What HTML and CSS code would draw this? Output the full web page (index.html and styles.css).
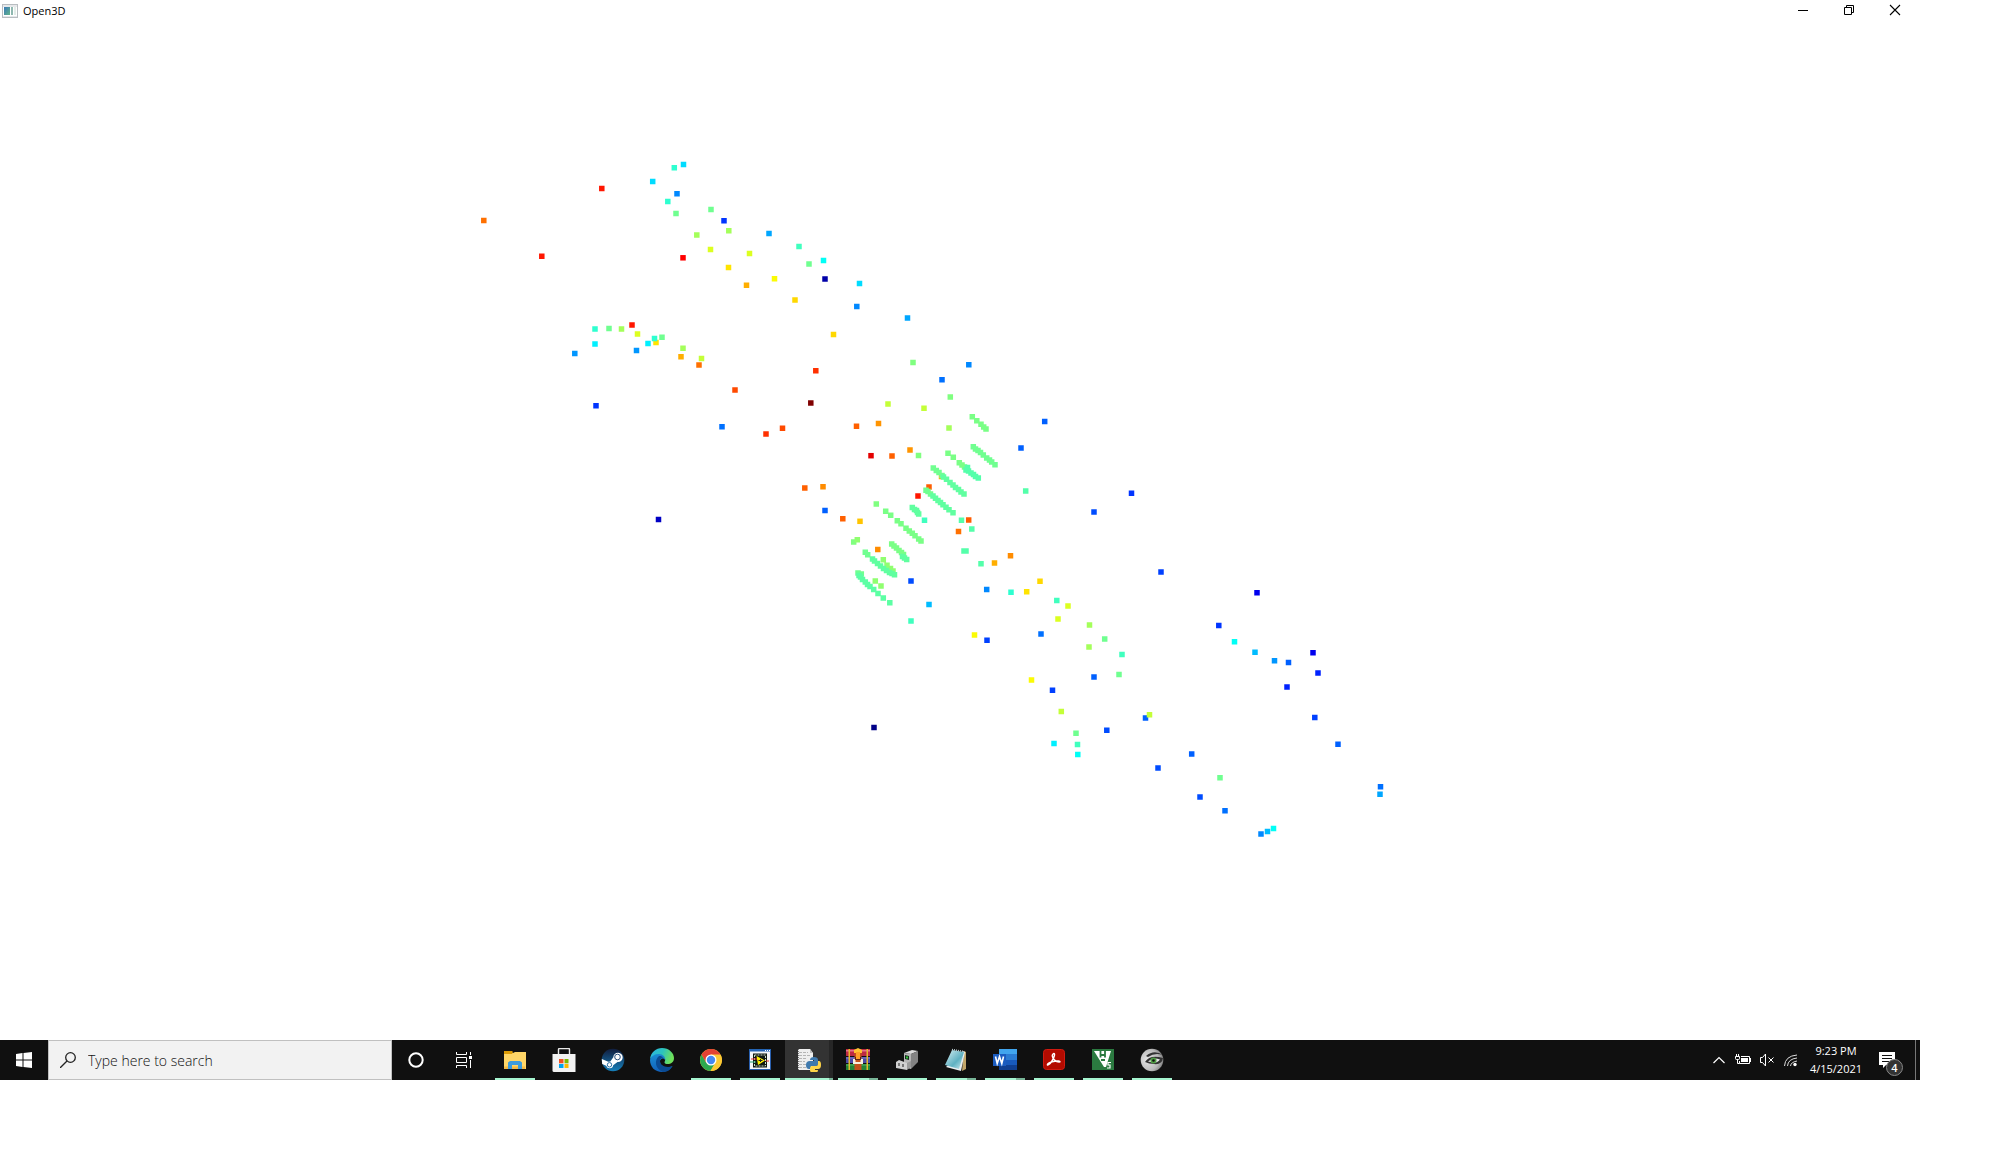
FILE: index.html
```
<!DOCTYPE html>
<html lang="en">
<head>
<meta charset="utf-8">
<title>Open3D</title>
<link rel="stylesheet" href="styles.css">
</head>
<body>
<div class="screen">
<header class="titlebar">
  <svg class="app-icon" width="16" height="14" viewBox="0 0 16 14" aria-hidden="true">
    <defs><linearGradient id="win" x1="0" y1="0" x2="1" y2="1"><stop offset="0" stop-color="#3a78b8"/><stop offset="1" stop-color="#63b58a"/></linearGradient></defs>
    <path fill="#b9bdc1" d="M0 0h16v14H0z"/><path fill="#e6e8ea" d="M1 1h14v12H1z"/>
    <path fill="#fff" d="M1 3h14v9H1z"/><path fill="url(#win)" d="M2 3h6v8H2z"/>
    <path fill="#8fb8b0" d="M9 3h2v8H9z"/><path fill="#e3ece8" d="M12 3h2v8h-2z"/>
  </svg>
  <h1 class="title">Open3D</h1>
  <div class="window-buttons">
    <button class="window-button" aria-label="Minimize"><svg width="12" height="12" viewBox="0 0 12 12"><path stroke="#000" d="M1 6.500h10"/></svg></button>
    <button class="window-button" aria-label="Restore"><svg width="12" height="12" viewBox="0 0 12 12"><path fill="none" stroke="#000" d="M1.500 3.500h7v7h-7zM3.500 3.500v-2h7v7h-2"/></svg></button>
    <button class="window-button" aria-label="Close"><svg width="12" height="12" viewBox="0 0 12 12"><path stroke="#000" stroke-width="1.100" d="M1 1l10 10M11 1L1 11"/></svg></button>
  </div>
</header>

<main class="viewport">
<svg class="cloud" viewBox="0 22 1920 1018" role="img" aria-label="Point cloud">
  <!-- orange points that sit behind the scan lines -->
  <path stroke="#ffb000" d="M941.500 476.500h0"/>
  <path stroke="#ff5c00" d="M929 487h0M968.700 520h0"/>
  <!-- dark blue to blue -->
  <path stroke="#000088" d="M874 727.500h0"/>
  <path stroke="#0000a8" d="M825 279h0"/>
  <path stroke="#0000c4" d="M658.500 519.500h0"/>
  <path stroke="#0000ee" d="M1257 592.700h0M1313 652.700h0"/>
  <path stroke="#0022ff" d="M1318 673h0M1287 687h0"/>
  <path stroke="#0034ff" d="M724 220.800h0M596 405.700h0M1131.500 493.300h0M1218.800 625.500h0"/>
  <path stroke="#0040ff" d="M1161 572h0M1052.500 690.300h0M1314.800 717.500h0M987 640.300h0"/>
  <path stroke="#004cff" d="M1094 512h0M911 581h0M1106.800 730.300h0M1158 768h0M1200 797h0"/>
  <path stroke="#0060ff" d="M1044.700 421.500h0M1021 448h0M825 510.500h0M1288.500 662.500h0M1145.500 718h0M1338 744.300h0M1094 677h0M1191.700 754h0"/>
  <path stroke="#0070ff" d="M722 426.700h0M942 379.800h0M1041 634h0M1225 810.800h0M1380.500 786.700h0"/>
  <path stroke="#0088ff" d="M856.800 306.500h0M968.800 364.700h0M986.700 589.500h0M1261 834h0M677 193.800h0"/>
  <path stroke="#0096ff" d="M574.800 353.500h0M636.500 350.500h0M1274.500 660.700h0"/>
  <path stroke="#00a6ff" d="M769 233.500h0M907.500 318h0M1380 794.300h0"/>
  <path stroke="#00bcff" d="M929 604.500h0M1255 652.300h0M1267.500 831.500h0"/>
  <!-- cyan -->
  <path stroke="#00dcff" d="M683.500 164.500h0M652.700 181.500h0M859.500 283.500h0"/>
  <path stroke="#00f0ff" d="M595 344h0M648 343.500h0M1054 743.500h0"/>
  <path stroke="#00fff6" d="M823.500 260.500h0M1234.500 641.700h0M1077.800 754.500h0M1273.500 828.500h0"/>
  <!-- yellow to orange -->
  <path stroke="#dcff20" d="M710.500 249.500h0M749.500 253.500h0M637.500 334h0M1068 606h0M1058 619h0"/>
  <path stroke="#c4ff38" d="M701.500 358.500h0M888 404h0M924 408.300h0M1149.500 714.800h0M1061.300 711.500h0"/>
  <path stroke="#fbfb04" d="M774.500 278.800h0M974.500 635h0M1031.500 680h0"/>
  <path stroke="#ffe400" d="M728.500 267.500h0M656 342.500h0M1026.700 591.700h0"/>
  <path stroke="#ffd800" d="M795 300h0M833.500 334.500h0M1040 581.300h0"/>
  <path stroke="#ffc400" d="M860 521.300h0"/>
  <path stroke="#ffae00" d="M746.500 285.300h0M681 356.700h0M994.500 563h0"/>
  <path stroke="#ff9400" d="M878.500 423.500h0M910 450h0"/>
  <path stroke="#ff8c00" d="M823 486.800h0M877.800 549.500h0M1010.500 555.700h0"/>
  <path stroke="#ff7000" d="M483.800 220.500h0M699 365h0M958.500 531.500h0"/>
  <path stroke="#ff6000" d="M856.500 426.200h0M892 456h0M804.800 488h0M842.800 518.700h0"/>
  <path stroke="#ff4a00" d="M735 390h0M782.500 428.200h0"/>
  <path stroke="#ff3000" d="M815.800 370.700h0M766 434h0"/>
  <path stroke="#ff1600" d="M601.800 188.500h0M541.800 256.200h0M632 325h0M918 496h0"/>
  <path stroke="#ff0000" d="M683 257.800h0"/>
  <path stroke="#e40000" d="M871 455.700h0"/>
  <path stroke="#800000" d="M810.800 403h0"/>
  <!-- single green points -->
  <path stroke="#2effd0" d="M674.300 167.700h0M667.800 201.500h0M595 329h0M654.500 338.500h0M1011 592.300h0"/>
  <path stroke="#40ffbe" d="M799 246.500h0M924.500 520.200h0M911 621h0M1056.800 600.500h0M1122 654.500h0M1077.500 744.500h0"/>
  <path stroke="#54ffaa" d="M961.500 520.300h0M971.800 529h0M964 551h0M966 551h0M981 563.700h0M1025.700 491h0"/>
  <path stroke="#70ff90" d="M676 213.500h0M711 209.500h0M809 264h0M609 328.500h0M662 337.300h0M1104.700 639h0M1119 674.500h0M1076 733.300h0M1220 777.700h0"/>
  <path stroke="#80ff80" d="M913 362.500h0M950.300 397h0M918.500 455.500h0M876.300 504h0M853.700 542h0"/>
  <path stroke="#90ff70" d="M857.300 539.700h0M883.300 559.700h0M875.300 581h0M881 586h0M887 565.300h0M890.500 568.500h0M893 571h0"/>
  <path stroke="#a4ff5a" d="M696.800 235h0M728.800 230.800h0M621.500 329h0M683 348.200h0M949 428h0M1089.500 625h0M1089 647h0"/>
  <!-- scan lines -->
  <path stroke="#7aff86" d="M972.300 416.700h0M976.800 420.700h0M981 424.300h0M983.700 427h0M986 429h0M948 453.300h0M953.300 457.300h0M959.300 462.700h0M962 465h0M964.500 467h0M885.700 511.300h0M890.700 515.300h0M897.300 520.700h0M901 523.700h0M906 528.300h0M909.300 531h0M912.300 533.300h0M915 535.700h0M918.700 539h0M921 541h0M891.700 544h0M894 546h0M896.500 548h0M899 550.500h0M901.500 552.500h0M903.500 554.500h0"/>
  <path stroke="#70ff90" d="M973.300 446.700h0M975.500 449h0M978 450.500h0M980.500 452.500h0M983.300 455h0M986.700 458h0M989.500 460h0M991.700 462h0M995 464.700h0M933.300 468h0M936.300 470.500h0M939 472.500h0M942 475.500h0M926 490.300h0M928 491.500h0M930.500 494h0M865.300 552.300h0M867.700 554.700h0M858 573h0M861.300 574h0"/>
  <path stroke="#54ffaa" d="M967.500 467.500h0M966 470h0M968.500 471h0M971 473h0M973.500 474.500h0M975.500 476.500h0M978.300 478h0"/>
  <path stroke="#60ffa0" d="M943.500 477h0M946.500 479.300h0M950 482.500h0M953 485h0M955.500 487.500h0M958.500 489.500h0M961 492h0M964 494h0M933 496h0M935.500 498.300h0M938 500.500h0M940.500 502.500h0M943 504.700h0M946 507.300h0M949 509.700h0M953 512.700h0M912.300 507.500h0M914.500 509.500h0M916.500 510.500h0M917.500 512.500h0M918.700 514h0M902.500 556.500h0M904.500 558h0M906.700 559.500h0M872.500 559h0M874.500 561h0M877.500 563.500h0M880.500 566h0M883.500 568.500h0M886.500 570.500h0M889.500 572.500h0M892 573.500h0M894.500 574.700h0"/>
  <path stroke="#5cffa4" d="M859 575.500h0M860.500 577h0M862.500 579.500h0M865.300 582h0M867.500 584.500h0M870 586.500h0M873.700 589.500h0M878 593.500h0M883.300 598h0M889.800 602.700h0"/>
</svg>
</main>

<footer class="taskbar">
  <button class="start" aria-label="Start"><svg width="16" height="16" viewBox="0 0 16 16"><path fill="#fff" d="M0 2l6.500-.9v6.400H0zM7.500 1L16 0v7.500H7.500zM0 8.500h6.500v6.400L0 14zM7.500 8.500H16V16l-8.500-1.100z"/></svg></button>
  <label class="search">
    <svg width="16" height="16" viewBox="0 0 16 16" aria-hidden="true"><g fill="none" stroke="#222" stroke-width="1.300"><circle cx="10.500" cy="5.500" r="4.800"/><path d="M7 9L0 16"/></g></svg>
    <input class="search-input" type="text" placeholder="Type here to search" aria-label="Type here to search">
  </label>
  <button class="tool" aria-label="Cortana"><svg width="16" height="16" viewBox="0 0 16 16"><circle cx="8" cy="8" r="6.700" fill="none" stroke="#fff" stroke-width="2"/></svg></button>
  <button class="tool" aria-label="Task View"><svg width="18" height="16" viewBox="0 0 18 16"><path fill="none" stroke="#fff" d="M1.500 0v2.500h10V0M1.500 5.500h10v5h-10zM1.500 16v-2.500h10V16M15.500 0v3M15.500 8v8"/><path fill="#fff" d="M14 4h3v3h-3z"/></svg></button>

  <nav class="apps" aria-label="Apps">
    <button class="app running" aria-label="File Explorer"><svg width="24" height="24" viewBox="0 0 24 24"><path fill="#ffd667" d="M1 5h9l2-1h11v17H1z"/><path fill="#dd9c06" d="M1 3h8l1 1-1 2H1z"/><path fill="#f4b942" d="M1 18.500h21V21H1z"/><path fill="#3c9bdc" d="M5 21v-6.500l2-1.500h10l2 1.500V21h-4v-4H9v4z"/></svg></button>
    <button class="app" aria-label="Microsoft Store"><svg width="24" height="24" viewBox="0 0 24 24"><path fill="none" stroke="#e8e8e8" stroke-width="1.400" d="M6.500 7V1.500q0-1 1-1h9q1 0 1 1V7"/><path fill="#f2f2f2" d="M.5 6h23v18H2q-1.500 0-1.500-1.500z"/><path fill="#f25022" d="M7 11h4.500v4.300H7z"/><path fill="#7fba00" d="M12.500 11h4v4.300h-4z"/><path fill="#00a4ef" d="M7 16h4.500v4H7z"/><path fill="#ffb900" d="M12.500 16h4v4h-4z"/></svg></button>
    <button class="app" aria-label="Steam"><svg width="24" height="24" viewBox="0 0 24 24"><defs><linearGradient id="st" x1="0" y1="0" x2="0" y2="1"><stop offset="0" stop-color="#111d3d"/><stop offset="1" stop-color="#1680bb"/></linearGradient></defs><circle cx="12" cy="12" r="11.300" fill="url(#st)"/><path fill="#fff" d="M.8 11l6.500 2.700 2-.2 3-4.200a4.700 4.700 0 1 1 4.200 4.700l-4.300 3.200a3.600 3.600 0 0 1-7 .6L1.200 16z"/><circle cx="16.500" cy="9" r="2.800" fill="#fff" stroke="#2a507c" stroke-width="1"/><circle cx="8.500" cy="16.800" r="2.200" fill="none" stroke="#2a6da0" stroke-width="1"/></svg></button>
    <button class="app" aria-label="Microsoft Edge"><svg width="24" height="24" viewBox="0 0 24 24"><defs><linearGradient id="e1" x1="0" y1="0" x2="1" y2=".3"><stop offset="0" stop-color="#2bb4e8"/><stop offset=".55" stop-color="#2cc3bd"/><stop offset="1" stop-color="#6ee05a"/></linearGradient><linearGradient id="e2" x1="0" y1="0" x2=".3" y2="1"><stop offset="0" stop-color="#1b8fd6"/><stop offset="1" stop-color="#1160b8"/></linearGradient></defs><path fill="url(#e2)" d="M0 12C1 6 6 5 11 6c3 .5 5 3 4 6-2-3-5-1-5 1.500 0 5 7 7.500 12.500 4.500C20 22 16 24 12 24 5 24 0 19 0 12z"/><path fill="#0b4b93" d="M9 8c-5 4-4 13 4 16 5 0 8-3 9.500-6C17 20.500 10 18 10 13c0-2 1.200-3.300 3-3-1-2-2.600-2.300-4-2z"/><path fill="url(#e1)" d="M0 11C1 4 6 0 12 0c7 0 12 5 12 10 0 4-3 6-6.500 6-3 0-3.500-1.500-2.500-3 1-3-1.500-7-6-7C4.500 6 1.500 8 0 11z"/></svg></button>
    <button class="app running" aria-label="Google Chrome"><svg width="24" height="24" viewBox="0 0 24 24"><circle cx="12" cy="12" r="11" fill="#fcc934"/><path fill="#e34133" d="M12 12L2.500 6.500A11 11 0 0 1 21.500 6.500H12z"/><path fill="#2da94f" d="M2.500 6.500A11 11 0 0 0 11.500 23l5-8.500L12 12l-4.800 2.600z"/><path fill="#e34133" d="M2.500 6.500L7.200 14.700 12 10z"/><path fill="#fcc934" d="M12 7h9.700A11 11 0 0 1 11.500 23l5-8.500z"/><circle cx="12" cy="12" r="5.500" fill="#fff"/><circle cx="12" cy="12" r="4.200" fill="#4688f1"/></svg></button>
    <button class="app running" aria-label="LabVIEW"><svg width="24" height="24" viewBox="0 0 24 24"><path fill="#f4f6f8" stroke="#2a5fae" d="M1.500 1.500h21v20h-21z"/><path fill="#2464b4" d="M1 1h22v2.500H1z"/><path fill="#fff" d="M17 2h1v1h-1zM19 2h1v1h-1zM21 2h1v1h-1z"/><path fill="#101810" d="M5 5.500h14v14H5z"/><path fill="none" stroke="#c8d8c8" stroke-dasharray="2 1" d="M6.500 7h11v11h-11z"/><path stroke="#20a070" d="M2 14h6"/><path stroke="#e03030" d="M3 11h6M18 13h3"/><path fill="#ffee00" d="M8.500 8l8.500 4.500-7 4.500z"/><path stroke="#222" d="M10.500 12.500h4M12.500 11v3"/></svg></button>
    <button class="app running active grouped" aria-label="Python"><svg width="24" height="24" viewBox="0 0 24 24"><path fill="#eee" d="M1 1h12l3 4v17H1z"/><path fill="#bdbdbd" d="M13 1v4h3z"/><path stroke="#b4b4b4" stroke-dasharray="3 1" d="M2 4.500h9M2 7.500h12M2 10.500h8M2 13.500h6M2 16.500h7M2 19.500h8"/><path stroke="#777" stroke-dasharray="1 1" d="M1.500 1v21"/><path fill="#3f79ad" d="M13 12q0-3 4-3t4 3v4q0 2-2 2h-5v3h-2q-3 0-3-4t4-4h4v-1z"/><path fill="#ffd548" d="M21 13h1q2 0 2 4t-3 4h-3v1h3q0 3-4 3t-4-3v-2q0-2 2-2h4q2 0 2-2z"/></svg></button>
    <button class="app running grouped" aria-label="WinRAR"><svg width="24" height="24" viewBox="0 0 24 24"><path fill="#bd2945" d="M0 1h24v7H0z"/><path fill="#4b4aa6" d="M0 9h24v6H0z"/><path fill="#238438" d="M0 16h24v6H0z"/><path fill="#e4718a" d="M0 2h24v1.500H0z"/><path fill="#8080cc" d="M0 9.500h24v1H0z"/><path fill="#56b763" d="M0 16.500h24v1H0z"/><path fill="#e5b82c" d="M2.500 1h1.500v21H2.500zM20.500 1H22v21h-1.500z"/><path fill="#c2501b" d="M8.500 1h7v21h-7z"/><path fill="#ffc233" d="M8 2l4-2 4 2v3H8z"/><path fill="#f7f0dd" d="M7 11h2.500v3h5v-3H17v5H7z"/><path fill="#5c2412" d="M9 9h6v3H9z"/><path fill="#ff9d28" d="M10 4h4v7h-4z"/></svg></button>
    <button class="app running" aria-label="Device manager"><svg width="24" height="24" viewBox="0 0 24 24"><path fill="#dcdcdc" d="M9 5l8-3 6 1-7 3z"/><path fill="#b6b6b6" d="M9 5l7 1v15l-7-2z"/><path fill="#838383" d="M16 6l7-3v11l-7 7z"/><path fill="#142c18" d="M10 7l4 1v4l-4-1z"/><path fill="#31c43a" d="M11 8.500h2v2h-2z"/><path fill="#d0d0d0" d="M1 14l3-2 8 3v7l-11-2z"/><path fill="#777" d="M3 15h2v3H3zM7 16h2v3H7z"/><path fill="#9a9a9a" d="M12 15l4-2v6l-4 3z"/></svg></button>
    <button class="app running grouped" aria-label="Notepad"><svg width="24" height="24" viewBox="0 0 24 24"><defs><linearGradient id="np" x1="0" y1="0" x2="1" y2="1"><stop offset="0" stop-color="#d9f0f3"/><stop offset=".6" stop-color="#5fb1c2"/><stop offset="1" stop-color="#d3edf2"/></linearGradient></defs><path fill="#c2a66a" d="M20 3l2 1v17l-4 2z"/><path fill="#e9eef0" d="M19 3l2 1-4 19L2 19z"/><path fill="url(#np)" d="M8 2l12 2-5 17-14-4z"/><path stroke="#b9c8cb" stroke-width="1.500" stroke-dasharray="1 1" d="M8 1.500l12 2"/></svg></button>
    <button class="app running grouped" aria-label="Word"><svg width="24" height="24" viewBox="0 0 24 24"><path fill="#41a5ee" d="M6 1h18v6H6z"/><path fill="#2b7cd3" d="M6 6h18v6H6z"/><path fill="#185abd" d="M6 12h18v5H6z"/><path fill="#103f91" d="M6 17h18v5H6z"/><path fill="#1b5cc0" d="M0 6h13v12H0z"/><path fill="none" stroke="#fff" stroke-width="1.600" d="M2.500 8.500l1.700 7 2.300-7 2.300 7 1.700-7"/></svg></button>
    <button class="app running" aria-label="Acrobat Reader"><svg width="24" height="24" viewBox="0 0 24 24"><rect x="1.500" y="1.500" width="21" height="20" rx="3" fill="#b30b00" stroke="#d01a10"/><path fill="none" stroke="#fff" stroke-width="1.500" d="M11 6c3-2 1 4-1 7-2 3-5 5-4.500 3.500.7-2 8-4 11-3.500 4 1-1 2-4-1-2-2-3-5-1.500-6z"/></svg></button>
    <button class="app running" aria-label="WinEdt"><svg width="24" height="24" viewBox="0 0 24 24"><path fill="#2b7a40" d="M1 1h22v21H1z"/><path fill="#fff" d="M3 3h17l-5 16h-2z"/><path fill="none" stroke="#2b7a40" stroke-width="1.800" d="M9.500 3v6.500M14 3v6.500M9.500 7H14M10 12h4"/><path fill="none" stroke="#fff" stroke-width="1.200" d="M20 14.500h-3v2.500h2v3h-3"/></svg></button>
    <button class="app running" aria-label="Eye viewer"><svg width="24" height="24" viewBox="0 0 24 24"><defs><radialGradient id="ey" cx=".3" cy=".5" r=".8"><stop offset="0" stop-color="#e6e6e6"/><stop offset=".6" stop-color="#bbb"/><stop offset="1" stop-color="#666"/></radialGradient></defs><circle cx="12" cy="12" r="11.300" fill="url(#ey)"/><path fill="#333" d="M6 8Q14 1 23 7q-8-3-15 2zM5 14q5-8 18-4-1 7-9 6-5 0-9-2z"/><path fill="#e8e8e8" d="M8 13.500q5-5 12-2-3 5-12 2z"/><circle cx="13.500" cy="12.500" r="3" fill="#4f9f43"/><circle cx="13.500" cy="12.500" r="1.300" fill="#111"/></svg></button>
  </nav>

  <div class="tray">
    <button class="tray-icon" aria-label="Show hidden icons"><svg width="14" height="14" viewBox="0 0 14 14"><path fill="none" stroke="#fff" stroke-width="1.200" d="M1.500 10L7 4.500 12.500 10"/></svg></button>
    <button class="tray-icon" aria-label="Battery"><svg width="16" height="14" viewBox="0 0 16 14"><path fill="none" stroke="#fff" d="M6 3.500h8.500v7h-10V8M1.500 1v2M3.500 1v2M.5 3.500h4v2q0 1-1 1h-2q-1 0-1-1zM2.500 7v3.500h2"/><path fill="#fff" d="M6 5h7v4H6zM15 5h1v4h-1z"/></svg></button>
    <button class="tray-icon" aria-label="Volume muted"><svg width="16" height="14" viewBox="0 0 16 14"><path fill="none" stroke="#fff" d="M1.500 4.500h2l3-3.500v12l-3-3.500h-2zM9.500 4.500l5 5M14.500 4.500l-5 5"/></svg></button>
    <button class="tray-icon" aria-label="Network"><svg width="14" height="14" viewBox="0 0 14 14"><g fill="none" stroke="#ddd"><path d="M.5 13Q1 3 13 2"/><path d="M3.500 13Q4 6 13 5"/><path d="M6.500 13Q7 9 13 8"/></g><circle cx="11" cy="11.500" r="1.700" fill="#fff"/></svg></button>
    <button class="clock"><span>9:23 PM</span><span>4/15/2021</span></button>
    <button class="notifications" aria-label="4 notifications">
      <svg width="16" height="16" viewBox="0 0 16 16"><path fill="#fff" d="M0 0h16v13H7l-3 3v-3H0z"/><path stroke="#111" d="M3 3.500h10M3 6.500h10M3 9.500h7"/></svg>
      <span class="badge">4</span>
    </button>
    <button class="show-desktop" aria-label="Show desktop"></button>
  </div>
</footer>
</div>
</body>
</html>
```
FILE: styles.css
```
* { box-sizing: border-box; }

body {
  margin: 0;
  background: #fff;
  color: #000;
  font-family: "Open Sans", "Noto Sans", sans-serif;
  font-size: 11px;
}

button {
  display: flex;
  align-items: center;
  justify-content: center;
  flex: none;
  margin: 0;
  padding: 0;
  border: 0;
  background: none;
  color: inherit;
  font: inherit;
}

svg { display: block; flex: none; }

.screen {
  display: flex;
  flex-direction: column;
  min-height: 100vh;
  padding: 0 90px 72px 0;
}

.titlebar {
  display: flex;
  align-items: center;
  height: 22px;
  padding-left: 2px;
}
.title {
  margin: 0 0 0 5px;
  font-size: 11px;
  font-weight: 400;
  line-height: 24px;
}
.window-buttons {
  display: flex;
  margin-left: auto;
  padding-right: 2px;
}
.window-button { width: 46px; height: 22px; padding-bottom: 2px; }

.viewport {
  display: flex;
  flex: 1;
}
.cloud {
  flex: 1;
  width: 100%;
  min-width: 0;
  stroke-width: 5.5px;
  stroke-linecap: square;
}

.taskbar {
  display: flex;
  height: 40px;
  background: #101010;
  color: #fff;
}
.start { width: 48px; }

.search {
  display: flex;
  align-items: center;
  gap: 12px;
  width: 344px;
  padding-left: 11px;
  border: 1px solid #c0c0c0;
  background: #f2f2f2;
}
.search-input {
  flex: 1;
  min-width: 0;
  padding: 0;
  border: 0;
  outline: 0;
  background: none;
  font: 300 14px "Open Sans", "Noto Sans", sans-serif;
}
.search-input::placeholder { color: #111; opacity: 1; }

.tool { width: 48px; }

.apps {
  display: flex;
  gap: 1px;
  margin-left: 3px;
}
.app {
  width: 48px;
  border-bottom: 2px solid transparent;
  border-top: 2px solid transparent;
}
.running {
  background: linear-gradient(#a6f5d0, #a6f5d0) center bottom / 40px 2px no-repeat border-box;
}
.grouped {
  background: linear-gradient(90deg, #a6f5d0 31px, #79b698 31px) center bottom / 40px 2px no-repeat border-box;
}
.active {
  background:
    linear-gradient(90deg, #a6f5d0 44px, #79b698 44px) left bottom / 48px 2px no-repeat border-box,
    linear-gradient(90deg, #333 44px, #262626 44px) border-box;
}

.tray {
  display: flex;
  margin-left: auto;
}
.tray-icon { width: 24px; }
.clock {
  flex-direction: column;
  width: 66px;
  line-height: 18px;
}
.notifications {
  position: relative;
  width: 46px;
  padding-right: 10px;
}
.badge {
  position: absolute;
  left: 17px;
  top: 19px;
  width: 17px;
  height: 17px;
  border: 1px solid #888;
  border-radius: 50%;
  background: #333;
  font-weight: 600;
  line-height: 15px;
  text-align: center;
}
.show-desktop {
  width: 5px;
  border-left: 1px solid #777;
}
```
